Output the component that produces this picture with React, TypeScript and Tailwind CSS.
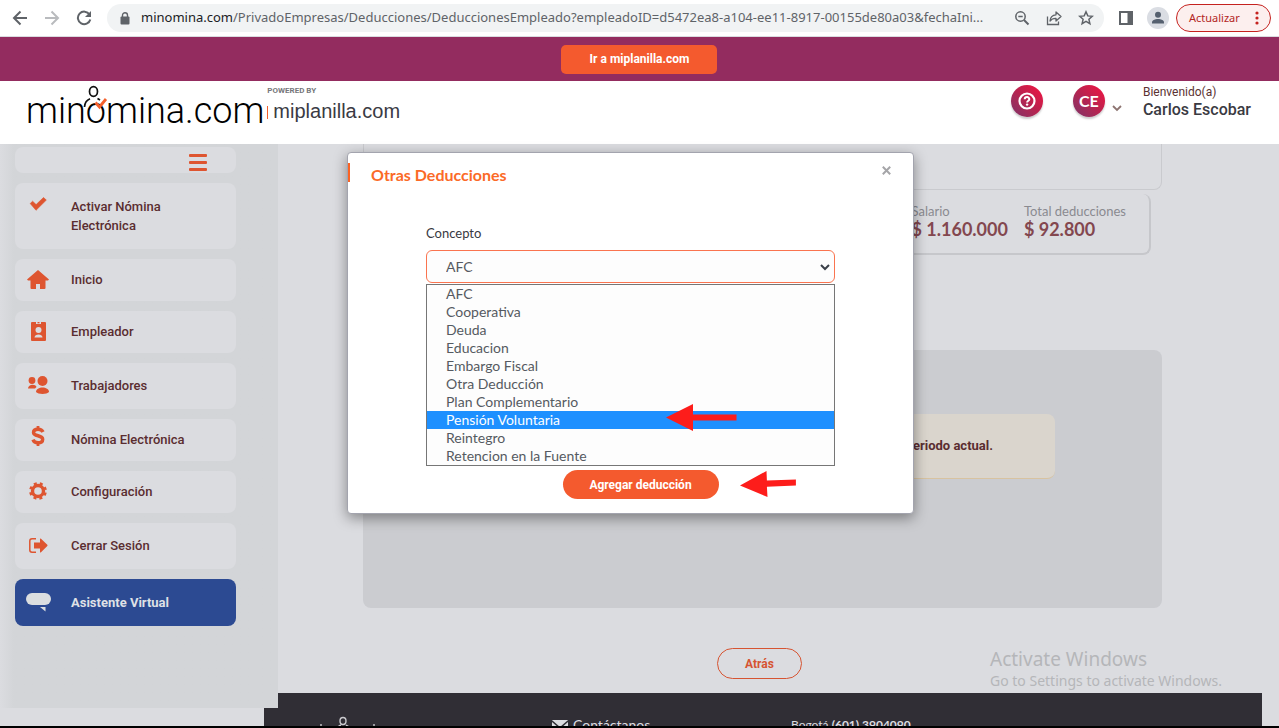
import type { ReactNode } from "react";

const roboto = "font-['Roboto','Liberation_Sans',sans-serif]";
const lato = "font-['Lato','Liberation_Sans',sans-serif]";
const ui = "font-['Noto_Sans','Liberation_Sans',sans-serif]";

/* ---------- Browser toolbar ---------- */

function ToolButton({ label, children }: { label: string; children: ReactNode }) {
  return (
    <button type="button" aria-label={label} className="flex h-8 w-8 shrink-0 items-center justify-center">
      {children}
    </button>
  );
}

function BrowserBar() {
  return (
    <div className={`flex h-[37px] shrink-0 items-center border-b border-[#dadce0] bg-white pl-1 pr-2 ${ui}`}>
      <ToolButton label="Atrás en el historial">
        <svg width="16" height="16" viewBox="0 0 16 16" fill="none" stroke="#5f6368" strokeWidth="2">
          <path d="M15 8H2M8.5 1.5 2 8l6.500 6.500" />
        </svg>
      </ToolButton>
      <ToolButton label="Adelante">
        <svg width="16" height="16" viewBox="0 0 16 16" fill="none" stroke="#b9bbbe" strokeWidth="2">
          <path d="M1 8h13M7.500 1.500 14 8l-6.500 6.500" />
        </svg>
      </ToolButton>
      <ToolButton label="Recargar">
        <svg width="16" height="16" viewBox="0 0 16 16" fill="none" stroke="#5f6368" strokeWidth="2">
          <path d="M13.500 4.500A6.300 6.300 0 1 0 14.300 9.500" />
          <path d="M15 1v6H9z" fill="#5f6368" stroke="none" />
        </svg>
      </ToolButton>
      <div className="ml-[7px] flex h-7 min-w-0 flex-1 items-center rounded-full bg-[#f1f3f4] pl-[13px] pr-[2px]">
        <svg width="10" height="13" viewBox="0 0 10 13" className="shrink-0">
          <rect x="0.500" y="4.500" width="9" height="8" rx="1" fill="#5f6368" />
          <path d="M2.500 5V3.200a2.500 2.500 0 0 1 5 0V5" fill="none" stroke="#5f6368" strokeWidth="1.400" />
        </svg>
        <p className="ml-[11px] min-w-0 flex-1 whitespace-nowrap text-[13px] text-[#5f6368]">
          <span className="text-[#202124]">minomina.com</span>
          /PrivadoEmpresas/Deducciones/DeduccionesEmpleado?empleadoID=d5472ea8-a104-ee11-8917-00155de80a03&amp;fechaIni...
        </p>
        <div className="ml-2 flex shrink-0">
          <ToolButton label="Zoom">
            <svg width="16" height="16" viewBox="0 0 16 16" fill="none" stroke="#5f6368" strokeWidth="1.500">
              <circle cx="6.500" cy="6.500" r="4.700" />
              <path d="M4.300 6.500h4.400" />
              <path d="m10 10 4.500 4.500" strokeWidth="2" />
            </svg>
          </ToolButton>
          <ToolButton label="Compartir">
            <svg width="16" height="16" viewBox="0 0 16 16" fill="none" stroke="#5f6368" strokeWidth="1.300">
              <path d="M1.500 6.500v8h11v-3" />
              <path d="M4 11c.300-4 2.500-6 6-6.200V2l5 4.500-5 4.500V8.300C7.500 8.200 5.500 9 4 11z" strokeLinejoin="round" />
            </svg>
          </ToolButton>
          <ToolButton label="Favorito">
            <svg width="16" height="16" viewBox="0 0 16 16" fill="none" stroke="#5f6368" strokeWidth="1.500">
              <path d="m8 1.800 1.800 4.100 4.500.400-3.400 3 1 4.400L8 11.400l-3.900 2.300 1-4.400-3.400-3 4.500-.400z" />
            </svg>
          </ToolButton>
        </div>
      </div>
      <div className="ml-[6px] flex">
        <ToolButton label="Panel lateral">
          <svg width="14" height="14" viewBox="0 0 14 14">
            <path fill="#5f6368" fillRule="evenodd" d="M0 0h14v14H0zM2 2v10h6.500V2z" />
          </svg>
        </ToolButton>
        <ToolButton label="Perfil">
          <svg width="22" height="22" viewBox="0 0 22 22">
            <circle cx="11" cy="11" r="11" fill="#dadde3" />
            <circle cx="11" cy="7.800" r="3" fill="#55606f" />
            <path d="M5 16.500v-1.200c0-2 3-3.300 6-3.300s6 1.300 6 3.300v1.200z" fill="#55606f" />
          </svg>
        </ToolButton>
      </div>
      <button
        type="button"
        className="ml-[2px] flex h-7 w-[95px] shrink-0 items-center justify-between rounded-full border border-[#c5221f] bg-[#fcefee] pl-3 pr-[11px] text-[11px] text-[#b3261e]"
      >
        Actualizar
        <svg width="4" height="14" viewBox="0 0 4 14" fill="#c5221f">
          <circle cx="2" cy="2" r="1.600" />
          <circle cx="2" cy="7" r="1.600" />
          <circle cx="2" cy="12" r="1.600" />
        </svg>
      </button>
    </div>
  );
}

/* ---------- Site header ---------- */

function Logo() {
  return (
    <a href="#inicio" aria-label="minomina.com" className="flex items-start pl-[26px] text-black">
      <span className="relative pt-2">
        <span className="block text-[36px] font-light leading-[44px] text-black">minomina.com</span>
        <svg width="30" height="28" viewBox="0 0 30 28" className="absolute left-[55px] top-[4px]" fill="none">
          <ellipse cx="12.500" cy="6.500" rx="4" ry="4.800" stroke="#111" strokeWidth="1.700" />
          <path d="M3.500 22c.300-4.500 2.500-7 5.500-8.200M16.500 13.500l2.500 1.500" stroke="#111" strokeWidth="1.700" />
          <path d="m14.500 17.500 4 4.500 6.500-8" stroke="#f4602c" strokeWidth="2.800" />
        </svg>
      </span>
      <span className="flex flex-col pl-[3px] pt-[5px]">
        <span className="text-[8px] font-bold leading-[10px] text-[#77787b]">POWERED BY</span>
        <span className="mt-[3px] flex items-center gap-[5px]">
          <span className="mt-[3px] h-[13px] w-px shrink-0 bg-[#f4602c]" />
          <span className="font-['Liberation_Sans',sans-serif] text-xl leading-6 text-[#3a3a44]">miplanilla.com</span>
        </span>
      </span>
    </a>
  );
}

function SiteHeader() {
  return (
    <header className={`shrink-0 ${roboto}`}>
      <div className="flex h-11 items-center justify-center bg-[#932c5f] pr-[2px]">
        <a
          href="#miplanilla"
          className="flex h-[29px] w-[156px] items-center justify-center rounded-[5px] bg-[#f45a2e] pl-[2px] text-xs font-bold text-white"
        >
          Ir a miplanilla.com
        </a>
      </div>
      <div className="flex h-[63px] items-start justify-between bg-white pr-7">
        <Logo />
        <div className="flex items-start pt-1">
          <button
            type="button"
            aria-label="Ayuda"
            className="flex h-8 w-8 items-center justify-center rounded-full bg-linear-to-tr from-[#7d3068] via-[#b8224f] to-[#f5093f] shadow-[0_2px_2px_rgba(0,0,0,0.2)]"
          >
            <svg width="18" height="18" viewBox="0 0 18 18" fill="none" stroke="#fff">
              <circle cx="9" cy="9" r="7.500" strokeWidth="2.200" />
              <path d="M6.700 7.300c.100-3 4.700-2.800 4.600-.100 0 1.500-2.200 1.500-2.200 3.200" strokeWidth="2" />
              <circle cx="9.100" cy="12.600" r="1.200" fill="#fff" stroke="none" />
            </svg>
          </button>
          <button type="button" aria-label="Cuenta" className="ml-[30px] flex items-center">
            <span className={`flex h-8 w-8 items-center justify-center rounded-full bg-linear-to-tr from-[#7d3068] via-[#b8224f] to-[#f5093f] text-base font-bold text-white shadow-[0_2px_2px_rgba(0,0,0,0.2)] ${lato}`}>
              CE
            </span>
            <svg width="10" height="7" viewBox="0 0 10 7" fill="none" className="ml-[7px] mt-[14px]">
              <path d="m1 1 4 4 4-4" stroke="#8d7471" strokeWidth="1.800" />
            </svg>
          </button>
          <div className="ml-[21px]">
            <p className="text-xs leading-[14px] text-[#5b3232]">Bienvenido(a)</p>
            <p className="text-base font-medium leading-[22px] text-[#3a3a42]">Carlos Escobar</p>
          </div>
        </div>
      </div>
    </header>
  );
}

/* ---------- Side menu ---------- */

const O = "#de5530";

const icons: Record<string, ReactNode> = {
  check: (
    <svg width="18" height="14" viewBox="0 0 18 14" className="mb-6">
      <path d="m1.200 6.500 2.400-2.300 3.500 3.400L14.500.500l2.800 2.600L7 13.300z" fill={O} stroke={O} strokeWidth="0.600" strokeLinejoin="round" />
    </svg>
  ),
  home: (
    <svg width="22" height="19" viewBox="0 0 22 19" fill={O}>
      <path d="M11 0 0 9.500 1 10.600h2.500V18q0 1 1 1H9v-5h4v5h4.500q1 0 1-1v-7.400H21l1-1.100z" />
    </svg>
  ),
  badge: (
    <svg width="15" height="19" viewBox="0 0 15 19">
      <path fill={O} fillRule="evenodd" d="M1 0h4v2h5V0h4q1 0 1 1v17q0 1-1 1H1q-1 0-1-1V1q0-1 1-1z" />
      <rect x="6.500" y="0" width="2" height="1.300" fill={O} />
      <circle cx="7.500" cy="8" r="3" fill="#dbdce0" />
      <path d="M3.500 15.500c0-4 8-4 8 0z" fill="#dbdce0" />
    </svg>
  ),
  users: (
    <svg width="21" height="18" viewBox="0 0 21 18" fill={O}>
      <circle cx="4" cy="4.500" r="3.400" />
      <path d="M0 12.500c0-4.500 7.500-5 8.500-1.500L7 12.500z" />
      <circle cx="14.500" cy="5" r="5" />
      <path d="M8 16c0-6 13-6 13 0-2 2.500-11 2.500-13 0z" />
    </svg>
  ),
  dollar: (
    <svg width="14" height="20" viewBox="0 0 14 20" className="mb-[7px]">
      <path d="M12 6C11 3.600 9 3.200 7 3.200c-3 0-4.500 1.300-4.500 3.200C2.500 10.800 11.700 8.700 11.700 13.200c0 2.300-2 3.600-4.700 3.600-2.600 0-4.200-1-5-3.200" fill="none" stroke={O} strokeWidth="3.400" />
      <path d="M7 0v4M7 16v4" stroke={O} strokeWidth="2.800" />
    </svg>
  ),
  gear: (
    <svg width="18" height="18" viewBox="0 0 18 18">
      <circle cx="9" cy="9" r="5.500" fill="none" stroke={O} strokeWidth="3.400" />
      <circle cx="9" cy="9" r="7.700" fill="none" stroke={O} strokeWidth="2.400" strokeDasharray="3 3.047" strokeDashoffset="4.500" />
    </svg>
  ),
  exit: (
    <svg width="19" height="15" viewBox="0 0 19 15">
      <path d="M7 .8H3Q.8.800.8 3v9q0 2.200 2.200 2.200h4" fill="none" stroke={O} strokeWidth="1.500" />
      <path d="M5 4.500h6V.800q.300-.600 1 0l6.300 6q.500.600 0 1.200L12 14.200q-.700.500-1 0v-3.700H5z" fill={O} />
    </svg>
  ),
  chat: (
    <svg width="25" height="19" viewBox="0 0 25 19" fill="#dbdee0">
      <rect x="0" y="0" width="25" height="12" rx="6" />
      <path d="M14 14h5.500v4.500z" />
    </svg>
  ),
};

const menu = [
  { label: "Activar Nómina Electrónica", icon: "check", size: "h-[66px]" },
  { label: "Inicio", icon: "home", size: "h-[42px] pb-[2px]" },
  { label: "Empleador", icon: "badge", size: "h-[42px] pb-[2px]" },
  { label: "Trabajadores", icon: "users", size: "h-[46px] pb-[2px]" },
  { label: "Nómina Electrónica", icon: "dollar", size: "h-[42px] pb-[2px]" },
  { label: "Configuración", icon: "gear", size: "h-[42px] pb-[2px]" },
  { label: "Cerrar Sesión", icon: "exit", size: "h-[46px] pb-[2px]" },
];

function MenuLink({ label, icon, size }: { label: string; icon: string; size: string }) {
  return (
    <a href="#menu" className={`flex items-center rounded-lg bg-[#dbdce0] pl-[10px] text-[#5a2d30] ${size}`}>
      <span className="flex w-[26px] justify-center">{icons[icon]}</span>
      <span className="ml-5 w-[120px]">{label}</span>
    </a>
  );
}

function Sidebar() {
  return (
    <nav
      aria-label="Principal"
      className={`z-10 -mr-[14px] w-[278px] shrink-0 self-start bg-linear-to-r from-[#dbdce0] via-[#d3d5d8] via-5% to-[#d3d5d8] pb-[82px] pl-[15px] pr-[42px] pt-[3px] text-[13px] font-medium leading-[19px] ${roboto}`}
    >
      <div className="flex flex-col gap-[10px]">
        <div className="flex h-[26px] items-center justify-end rounded-lg bg-[#dbdce0] pr-[29px]">
          <button type="button" aria-label="Menú">
            <svg width="18" height="17" viewBox="0 0 18 17" className="mt-1" fill={O}>
              <rect width="18" height="3" rx="1" />
              <rect y="7" width="18" height="3" rx="1" />
              <rect y="14" width="18" height="3" rx="1" />
            </svg>
          </button>
        </div>
        {menu.map((m) => (
          <MenuLink key={m.label} {...m} />
        ))}
        <a href="#asistente" className="flex h-[47px] items-center rounded-lg bg-[#2c4a92] pl-[10px] font-bold text-[#dfe1e6]">
          <span className="flex w-[26px] justify-center">{icons.chat}</span>
          <span className="ml-5">Asistente Virtual</span>
        </a>
      </div>
    </nav>
  );
}

/* ---------- Page content behind the dialog ---------- */

function Figure({ label, value }: { label: string; value: string }) {
  return (
    <div>
      <dt className="text-[13px] leading-4 text-[#8a8a90]">{label}</dt>
      <dd className="text-lg font-bold leading-5 text-[#83474f]">{value}</dd>
    </div>
  );
}

function Content() {
  return (
    <div className="flex min-w-0 flex-1 flex-col">
      <main className={`flex h-[549px] shrink-0 flex-col pl-[99px] pr-[117px] ${lato}`}>
        <div className="h-[46px] rounded-b-lg border-x border-b border-[#c9cace]" />
        <dl className="mr-[11px] mt-1 flex h-[61px] justify-end gap-4 rounded-lg border-b-2 border-r-2 border-[#c6c7cb] pr-[23px] pt-[9px]">
          <Figure label="Salario" value="$ 1.160.000" />
          <Figure label="Total deducciones" value="$ 92.800" />
        </dl>
        <section className="mt-[95px] h-[258px] rounded-lg bg-[#cbccd0] px-[107px] pt-16">
          <p className={`flex h-[65px] items-center justify-end rounded-lg border-b border-[#d8c3a0] bg-[#dad5cd] pr-[62px] text-[13px] font-bold text-[#5a2d30] ${roboto}`}>
            periodo actual.
          </p>
        </section>
        <div className="mt-10 flex justify-center pr-[6px]">
          <button
            type="button"
            className={`h-[31px] w-[85px] rounded-full border border-[#d65432] text-xs font-bold text-[#d65432] ${roboto}`}
          >
            Atrás
          </button>
        </div>
      </main>
      <footer className={`mr-[17px] flex flex-1 items-start overflow-hidden bg-[#302e35] pl-[52px] pt-[23px] text-[#dcdce0] ${lato}`}>
        <svg width="66" height="40" viewBox="0 0 66 40" fill="none" stroke="#c9c9cd" strokeWidth="1.400" className="shrink-0">
          <ellipse cx="27" cy="5" rx="3" ry="3.500" />
          <path d="M21 14c.500-3 2-4.500 4-5M30 9l2.500 1.500" />
          <path d="M5 8v2M58 8v2" />
        </svg>
        <a href="#contacto" className="ml-[170px] flex w-[239px] shrink-0 items-start gap-[5px] text-sm leading-[18px]">
          <svg width="16" height="12" viewBox="0 0 16 12" className="mt-1">
            <rect width="16" height="12" rx="1" fill="#dcdce0" />
            <path d="m0 1 8 7 8-7" fill="none" stroke="#302e35" strokeWidth="1.500" />
          </svg>
          Contáctanos
        </a>
        <p className="text-xs leading-[18px]">
          Bogotá <b>(601) 3904090</b>
        </p>
      </footer>
    </div>
  );
}

/* ---------- Dialog ---------- */

const concepts = [
  "AFC",
  "Cooperativa",
  "Deuda",
  "Educacion",
  "Embargo Fiscal",
  "Otra Deducción",
  "Plan Complementario",
  "Pensión Voluntaria",
  "Reintegro",
  "Retencion en la Fuente",
];

function DeductionDialog() {
  return (
    <div className="absolute inset-x-0 top-[152px] z-20 flex justify-center pr-[18px]">
      <form
        role="dialog"
        aria-labelledby="dialog-title"
        className={`relative w-[567px] rounded-[4px] border border-[#a3a4ae] bg-white pb-[14px] shadow-[0_4px_14px_rgba(0,0,0,0.4)] ${lato}`}
      >
        <div className="flex items-start justify-between pr-[22px] pt-[10px]">
          <div className="flex items-start">
            <span className="h-[19px] w-[2px] bg-[#fb6323]" />
            <h2 id="dialog-title" className="ml-[21px] text-base font-bold leading-6 text-[#fb6a27]">
              Otras Deducciones
            </h2>
          </div>
          <button type="button" aria-label="Cerrar" className="mt-[3px]">
            <svg width="9" height="9" viewBox="0 0 9 9" stroke="#a5a5a8" strokeWidth="2">
              <path d="m.800.800 7.400 7.400M8.200.800.800 8.200" />
            </svg>
          </button>
        </div>
        <div className="px-[78px] pt-9">
          <label htmlFor="concepto" className="block text-[13px] leading-5 text-[#38393f]">
            Concepto
          </label>
          <div className="relative mt-[7px]">
            <select
              id="concepto"
              defaultValue="AFC"
              className="block h-[33px] w-full appearance-none rounded-md border border-[#fa744f] bg-[#fdfdfd] pl-[19px] text-sm text-[#555a61] outline-none"
            >
              {concepts.map((c) => (
                <option key={c}>{c}</option>
              ))}
            </select>
            <svg width="10" height="7" viewBox="0 0 10 7" fill="none" className="pointer-events-none absolute right-[5px] top-[14px]">
              <path d="m1 1 4 4 4-4" stroke="#3b4049" strokeWidth="2" />
            </svg>
            <ul
              role="listbox"
              aria-label="Concepto"
              className="absolute inset-x-0 top-[34px] z-10 border border-[#767676] bg-[#fdfdfd] text-sm leading-[18px] text-[#555a61]"
            >
              {concepts.map((c) => (
                <li
                  key={c}
                  role="option"
                  aria-selected={c === "Pensión Voluntaria"}
                  className="pl-[19px] aria-selected:bg-[#1e90ff] aria-selected:text-white"
                >
                  {c}
                </li>
              ))}
            </ul>
          </div>
        </div>
        <div className="mt-[187px] flex justify-center pl-5">
          <button type="submit" className={`h-[29px] w-[156px] rounded-full bg-[#f45a2e] text-xs font-bold text-white ${roboto}`}>
            Agregar deducción
          </button>
        </div>
        <svg width="132" height="96" viewBox="0 0 132 96" fill="#fd1d1b" className="pointer-events-none absolute left-[318px] top-[250px] z-20">
          <path d="M0 14.500 27 1v10.500h43.500v6H27V28z" />
          <path d="M74 82.500 100.500 68l.400 9.500 29-1v6l-29 1.300.600 10.200z" />
        </svg>
      </form>
    </div>
  );
}

export default function App() {
  return (
    <div className="relative flex h-screen flex-col overflow-hidden border-b-2 border-black bg-[#dbdce0]">
      <BrowserBar />
      <SiteHeader />
      <div className="flex min-h-0 flex-1 overflow-hidden">
        <Sidebar />
        <Content />
      </div>
      <DeductionDialog />
      <div className={`pointer-events-none absolute bottom-[35px] right-[53px] w-[236px] text-[#b5b6b9] ${ui}`}>
        <p className="whitespace-nowrap text-[19px] leading-6">Activate Windows</p>
        <p className="whitespace-nowrap text-sm leading-5">Go to Settings to activate Windows.</p>
      </div>
    </div>
  );
}
